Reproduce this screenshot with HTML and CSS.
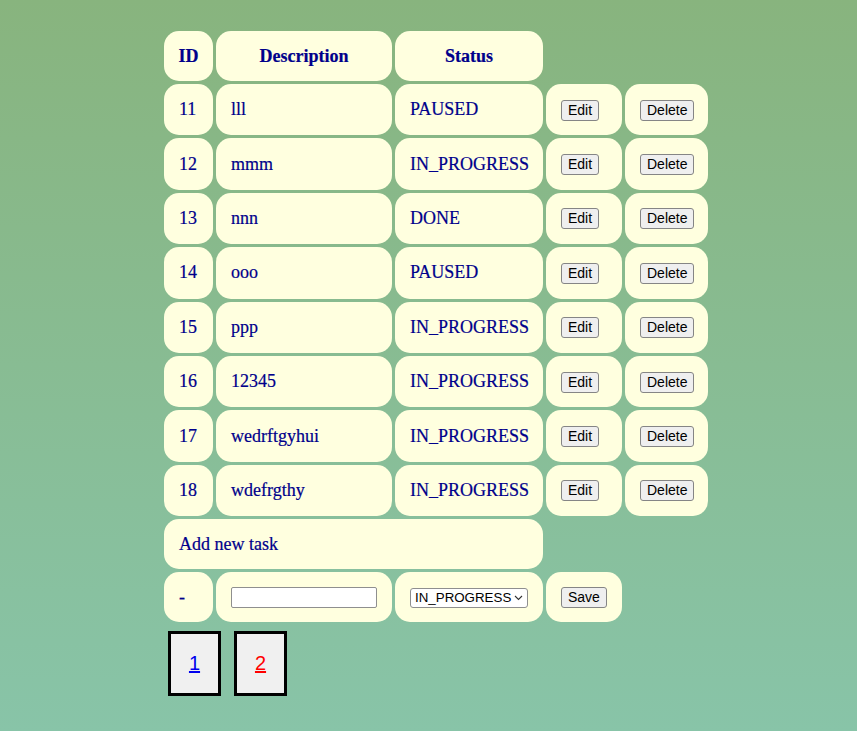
FILE: index.html
```html
<!DOCTYPE html>
<html>
<head>
<meta charset="utf-8">
<link rel="stylesheet" href="styles.css">
</head>
<body>
<div class="page">
  <table class="tasks">
    <colgroup>
      <col class="w-id"><col class="w-desc"><col class="w-status"><col class="w-edit"><col class="w-del">
    </colgroup>
    <thead>
      <tr class="head-row">
        <th>ID</th>
        <th>Description</th>
        <th>Status</th>
      </tr>
    </thead>
    <tbody>
      <tr class="row"><td>11</td><td>lll</td><td>PAUSED</td><td class="c-act"><button class="btn">Edit</button></td><td class="c-act"><button class="btn">Delete</button></td></tr>
      <tr class="row"><td>12</td><td>mmm</td><td>IN_PROGRESS</td><td class="c-act"><button class="btn">Edit</button></td><td class="c-act"><button class="btn">Delete</button></td></tr>
      <tr class="row"><td>13</td><td>nnn</td><td>DONE</td><td class="c-act"><button class="btn">Edit</button></td><td class="c-act"><button class="btn">Delete</button></td></tr>
      <tr class="row"><td>14</td><td>ooo</td><td>PAUSED</td><td class="c-act"><button class="btn">Edit</button></td><td class="c-act"><button class="btn">Delete</button></td></tr>
      <tr class="row"><td>15</td><td>ppp</td><td>IN_PROGRESS</td><td class="c-act"><button class="btn">Edit</button></td><td class="c-act"><button class="btn">Delete</button></td></tr>
      <tr class="row"><td>16</td><td>12345</td><td>IN_PROGRESS</td><td class="c-act"><button class="btn">Edit</button></td><td class="c-act"><button class="btn">Delete</button></td></tr>
      <tr class="row"><td>17</td><td>wedrftgyhui</td><td>IN_PROGRESS</td><td class="c-act"><button class="btn">Edit</button></td><td class="c-act"><button class="btn">Delete</button></td></tr>
      <tr class="row"><td>18</td><td>wdefrgthy</td><td>IN_PROGRESS</td><td class="c-act"><button class="btn">Edit</button></td><td class="c-act"><button class="btn">Delete</button></td></tr>
      <tr class="add-row"><td colspan="3">Add new task</td></tr>
      <tr class="form-row">
        <td>-</td>
        <td><input class="field" type="text"></td>
        <td><select class="picker"><option>IN_PROGRESS</option><option>PAUSED</option><option>DONE</option></select></td>
        <td class="c-act"><button class="btn">Save</button></td>
      </tr>
    </tbody>
  </table>
  <div class="pager">
    <div class="page-box"><a href="#" class="page-link">1</a></div>
    <div class="page-box"><a href="#" class="page-link current">2</a></div>
  </div>
</div>
</body>
</html>
```

FILE: styles.css
```css
html {
  min-height: 100%;
  background: linear-gradient(to bottom, #88b47e 0%, #88c4a8 100%);
}
body {
  margin: 0;
  min-height: 731px;
  font-family: "Liberation Serif", "Times New Roman", serif;
  color: #00008b;
}
.page {
  padding: 28px 0 0 161px;
}
.tasks {
  border-spacing: 3px;
  border-collapse: separate;
  table-layout: fixed;
  width: 550px;
}
.w-id { width: 49px; }
.w-desc { width: 176px; }
.w-status { width: 148px; }
.w-edit { width: 76px; }
.w-del { width: 83px; }
.tasks th,
.tasks td {
  background: #ffffdf;
  border-radius: 15px;
  padding: 0 0 0 15px;
  font-size: 18px;
  text-align: left;
  vertical-align: middle;
  white-space: nowrap;
  -webkit-text-stroke: 0.2px #00008b;
}
.tasks th {
  font-weight: bold;
  text-align: center;
  padding: 0;
}
.head-row th {
  height: 50px;
}
.row td {
  height: 51.4px;
}
.add-row td {
  height: 50px;
}
.form-row td {
  height: 50px;
}
.btn {
  font-family: "Liberation Sans", Arial, sans-serif;
  font-size: 14px;
  color: #000;
  background: #efefef;
  border: 1px solid #858585;
  border-radius: 3px;
  padding: 2px 6px;
  height: 21px;
  line-height: 15px;
  margin: 0;
  -webkit-text-stroke: 0;
}
.field {
  width: 146px;
  height: 21px;
  box-sizing: border-box;
  border: 1px solid #8f8f8f;
  border-radius: 2px;
  background: #fff;
  margin: 0;
}
.picker {
  appearance: none;
  -webkit-appearance: none;
  width: 118px;
  height: 20px;
  box-sizing: border-box;
  border: 1px solid #8f8f8f;
  border-radius: 3px;
  background: #fff url("data:image/svg+xml;utf8,<svg xmlns='http://www.w3.org/2000/svg' width='9' height='6' viewBox='0 0 9 6'><path d='M1 1l3.5 3.5 3.5-3.5' fill='none' stroke='%23333' stroke-width='1.1'/></svg>") no-repeat right 4px center;
  font-family: "Liberation Sans", Arial, sans-serif;
  font-size: 13.33px;
  color: #000;
  padding: 0 14px 0 4px;
  margin: 0;
  -webkit-text-stroke: 0;
}
.pager {
  display: flex;
  gap: 13px;
  padding: 6px 0 0 7px;
}
.page-box {
  width: 47px;
  height: 59px;
  border: 3px solid #000;
  background: #f0f0f0;
  display: flex;
  align-items: center;
  justify-content: center;
}
.page-link {
  font-family: "Liberation Sans", Arial, sans-serif;
  font-size: 20px;
  color: #0000ee;
  text-decoration: underline;
}
.page-link.current {
  color: #ff0000;
}
```
